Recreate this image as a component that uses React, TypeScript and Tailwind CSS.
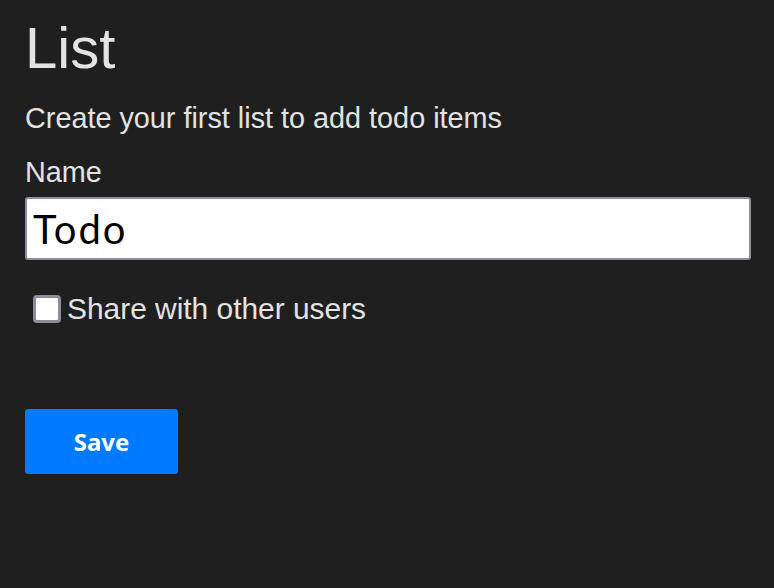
export default function App() {
  return (
    <div className="min-h-screen bg-[#1f1f1f] pl-[25px] pr-[23px] pt-4 font-['Liberation_Sans',Arial,sans-serif] text-[#e3e3e3]">
      <h1 className="text-[58px] leading-[64px] font-normal">List</h1>
      <p className="mt-[22px] text-[28.8px] leading-8">Create your first list to add todo items</p>

      <form className="mt-[22px]">
        <label htmlFor="name" className="block text-[28.8px] leading-8">
          Name
        </label>
        <input
          id="name"
          type="text"
          defaultValue="Todo"
          className="mt-[9px] block h-[63px] w-full rounded-[3px] border-2 border-[#8e8c9b] bg-white pl-[6px] font-['Lato',sans-serif] text-[40px] font-normal tracking-[0.05em] text-black outline-none"
        />

        <div className="mt-[33px] ml-2 flex items-center">
          <input
            id="share"
            type="checkbox"
            className="h-7 w-7 shrink-0 appearance-none rounded-[4px] border-[3px] border-[#8e8c9b] bg-white"
          />
          <label htmlFor="share" className="ml-[6px] text-[29.9px] leading-8">
            Share with other users
          </label>
        </div>

        <button
          type="button"
          className="mt-[84px] h-[65px] w-[153px] rounded-[3px] bg-[#007bff] font-['Noto_Sans',sans-serif] text-[24px] font-bold text-white"
        >
          Save
        </button>
      </form>
    </div>
  );
}
